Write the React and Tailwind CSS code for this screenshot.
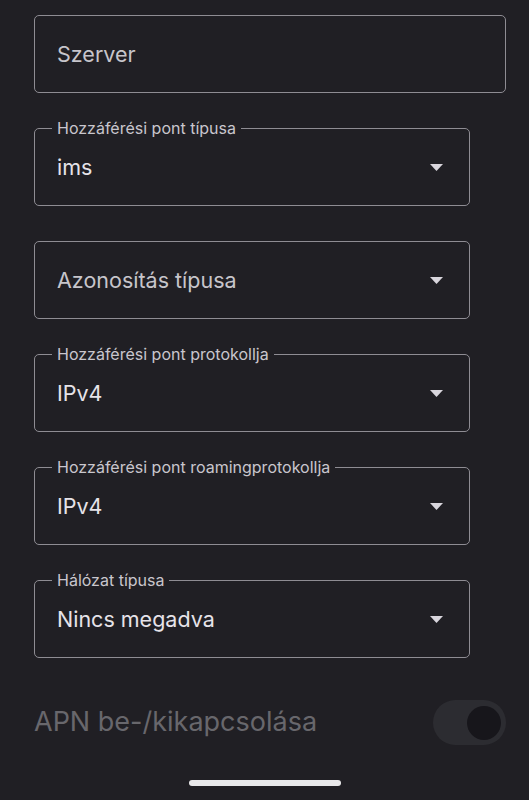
import React from 'react';

const font = { fontFamily: 'Inter, Roboto, "Noto Sans", sans-serif' };

const Arrow = () => (
  <svg width="13" height="7" viewBox="0 0 13 7" className="shrink-0">
    <path d="M0 0h13L6.5 7z" fill="#d9d6dd" />
  </svg>
);

const Field = ({ label, value, placeholder, select = true, wide = false }) => (
  <div className={`relative ${wide ? 'w-[472px]' : 'w-[436px]'}`}>
    {label && (
      <span className="absolute -top-[10px] left-[18px] px-[5px] bg-[#201f24] text-[16px] leading-[20px] text-[#c9c6cd]">
        {label}
      </span>
    )}
    <div className="h-[78px] rounded-[5px] border border-[#8e8c93] flex items-center pl-[22px] pr-[26px]">
      <span
        className={`flex-1 text-[21.5px] ${placeholder ? 'text-[#c7c5cb]' : 'text-[#e6e3e9]'}`}
      >
        {value || placeholder}
      </span>
      {select && <Arrow />}
    </div>
  </div>
);

export default function App() {
  return (
    <div className="w-[529px] h-[800px] bg-[#201f24] overflow-hidden flex flex-col" style={font}>
      <div className="pl-[34px] pt-[15px] flex flex-col gap-[35px]">
        <Field placeholder="Szerver" select={false} wide />
        <Field label="Hozzáférési pont típusa" value="ims" />
        <Field placeholder="Azonosítás típusa" />
        <Field label="Hozzáférési pont protokollja" value="IPv4" />
        <Field label="Hozzáférési pont roamingprotokollja" value="IPv4" />
        <Field label="Hálózat típusa" value="Nincs megadva" />
      </div>

      <div className="mt-[42px] pl-[34px] pr-[23px] flex items-center justify-between">
        <span className="text-[27px] text-[#68676c]">APN be-/kikapcsolása</span>
        <div className="w-[73px] h-[45px] rounded-full bg-[#2c2c31] flex items-center justify-end pr-[5px]">
          <div className="w-[34px] h-[34px] rounded-full bg-[#17161b]" />
        </div>
      </div>

      <div className="mt-auto mb-[14px] flex justify-center">
        <div className="w-[152px] h-[6px] rounded-full bg-[#e8e8ea]" />
      </div>
    </div>
  );
}
